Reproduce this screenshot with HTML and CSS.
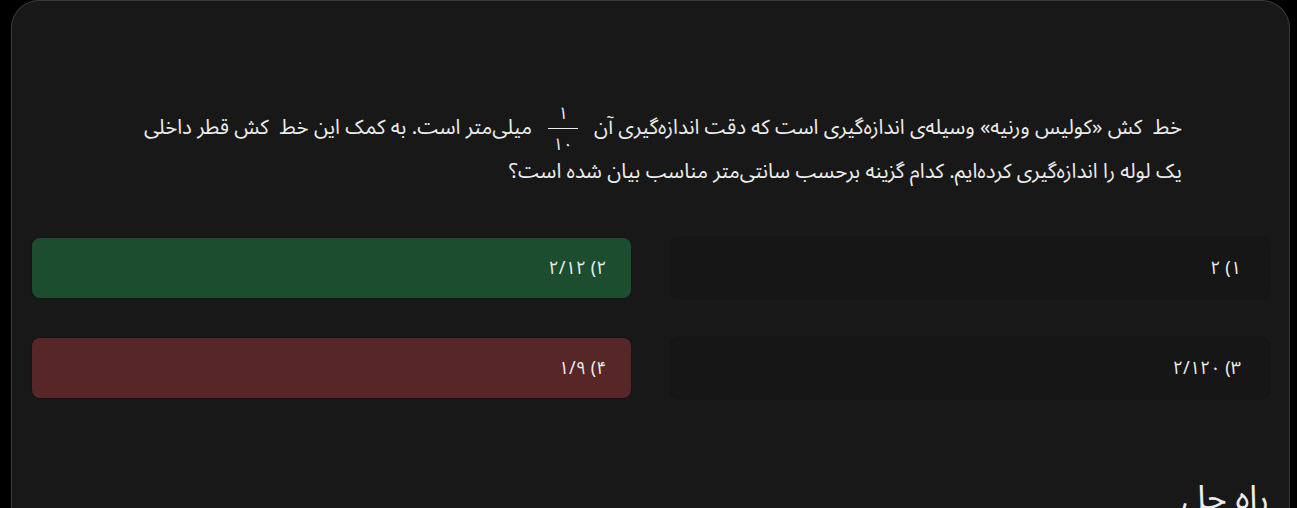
FILE: index.html
```html
<!DOCTYPE html>
<html lang="fa" dir="rtl">
<head>
<meta charset="utf-8">
<link rel="stylesheet" href="styles.css">
</head>
<body>
<div class="page">
  <div class="card">
    <p class="question">خط&nbsp; کش «کولیس ورنیه» وسیله‌ی اندازه‌گیری است که دقت اندازه‌گیری آن <span class="frac"><span class="num">۱</span><span class="den">۱۰</span></span> میلی‌متر است. به کمک این خط&nbsp; کش قطر داخلی یک لوله را اندازه‌گیری کرده‌ایم. کدام گزینه برحسب سانتی‌متر مناسب بیان شده است؟</p>
    <div class="options">
      <div class="option">۱) ۲</div>
      <div class="option correct">۲) ۲/۱۲</div>
      <div class="option">۳) ۲/۱۲۰</div>
      <div class="option wrong">۴) ۱/۹</div>
    </div>
    <h2 class="solution">راه حل</h2>
  </div>
</div>
</body>
</html>
```
FILE: styles.css
```css
html, body {
  margin: 0;
  padding: 0;
  background: #000;
  height: 100%;
  overflow: hidden;
}
body {
  font-family: "Noto Sans Arabic", "DejaVu Sans", sans-serif;
  color: #ececec;
}
.page {
  padding: 0 7px 0 11px;
}
.card {
  background: #181818;
  border: 1px solid #3a3a3a;
  border-bottom: none;
  border-radius: 28px 28px 0 0;
  padding: 105px 20px 0 20px;
  min-height: 600px;
}
.question {
  margin: 0 87px 0 95px;
  font-size: 20.5px;
  line-height: 44px;
  text-align: right;
}
.frac {
  display: inline-flex;
  flex-direction: column;
  align-items: center;
  vertical-align: middle;
  margin: -6px 11px;
  line-height: 20px;
  font-size: 17px;
  position: relative;
  top: 1px;
}
.num {
  padding: 0 4px 4px;
}
.den {
  border-top: 1.5px solid #ececec;
  padding: 6px 5px 0;
}
.options {
  display: grid;
  grid-template-columns: 1fr 1fr;
  column-gap: 40px;
  row-gap: 40px;
  margin-top: 44px;
}
.option {
  height: 60px;
  border-radius: 8px;
  display: flex;
  align-items: center;
  padding: 0 28px;
  font-size: 18px;
  background: #161616;
  box-shadow: 0 0 2px rgba(0,0,0,0.4);
}
.option.correct {
  background: #1c4d2e;
  padding: 0 24px;
}
.option.wrong {
  background: #572626;
  padding: 0 24px;
}
.solution {
  margin: 80px 0 0 0;
  font-size: 34px;
  font-weight: normal;
  text-align: right;
  line-height: 40px;
}
```
